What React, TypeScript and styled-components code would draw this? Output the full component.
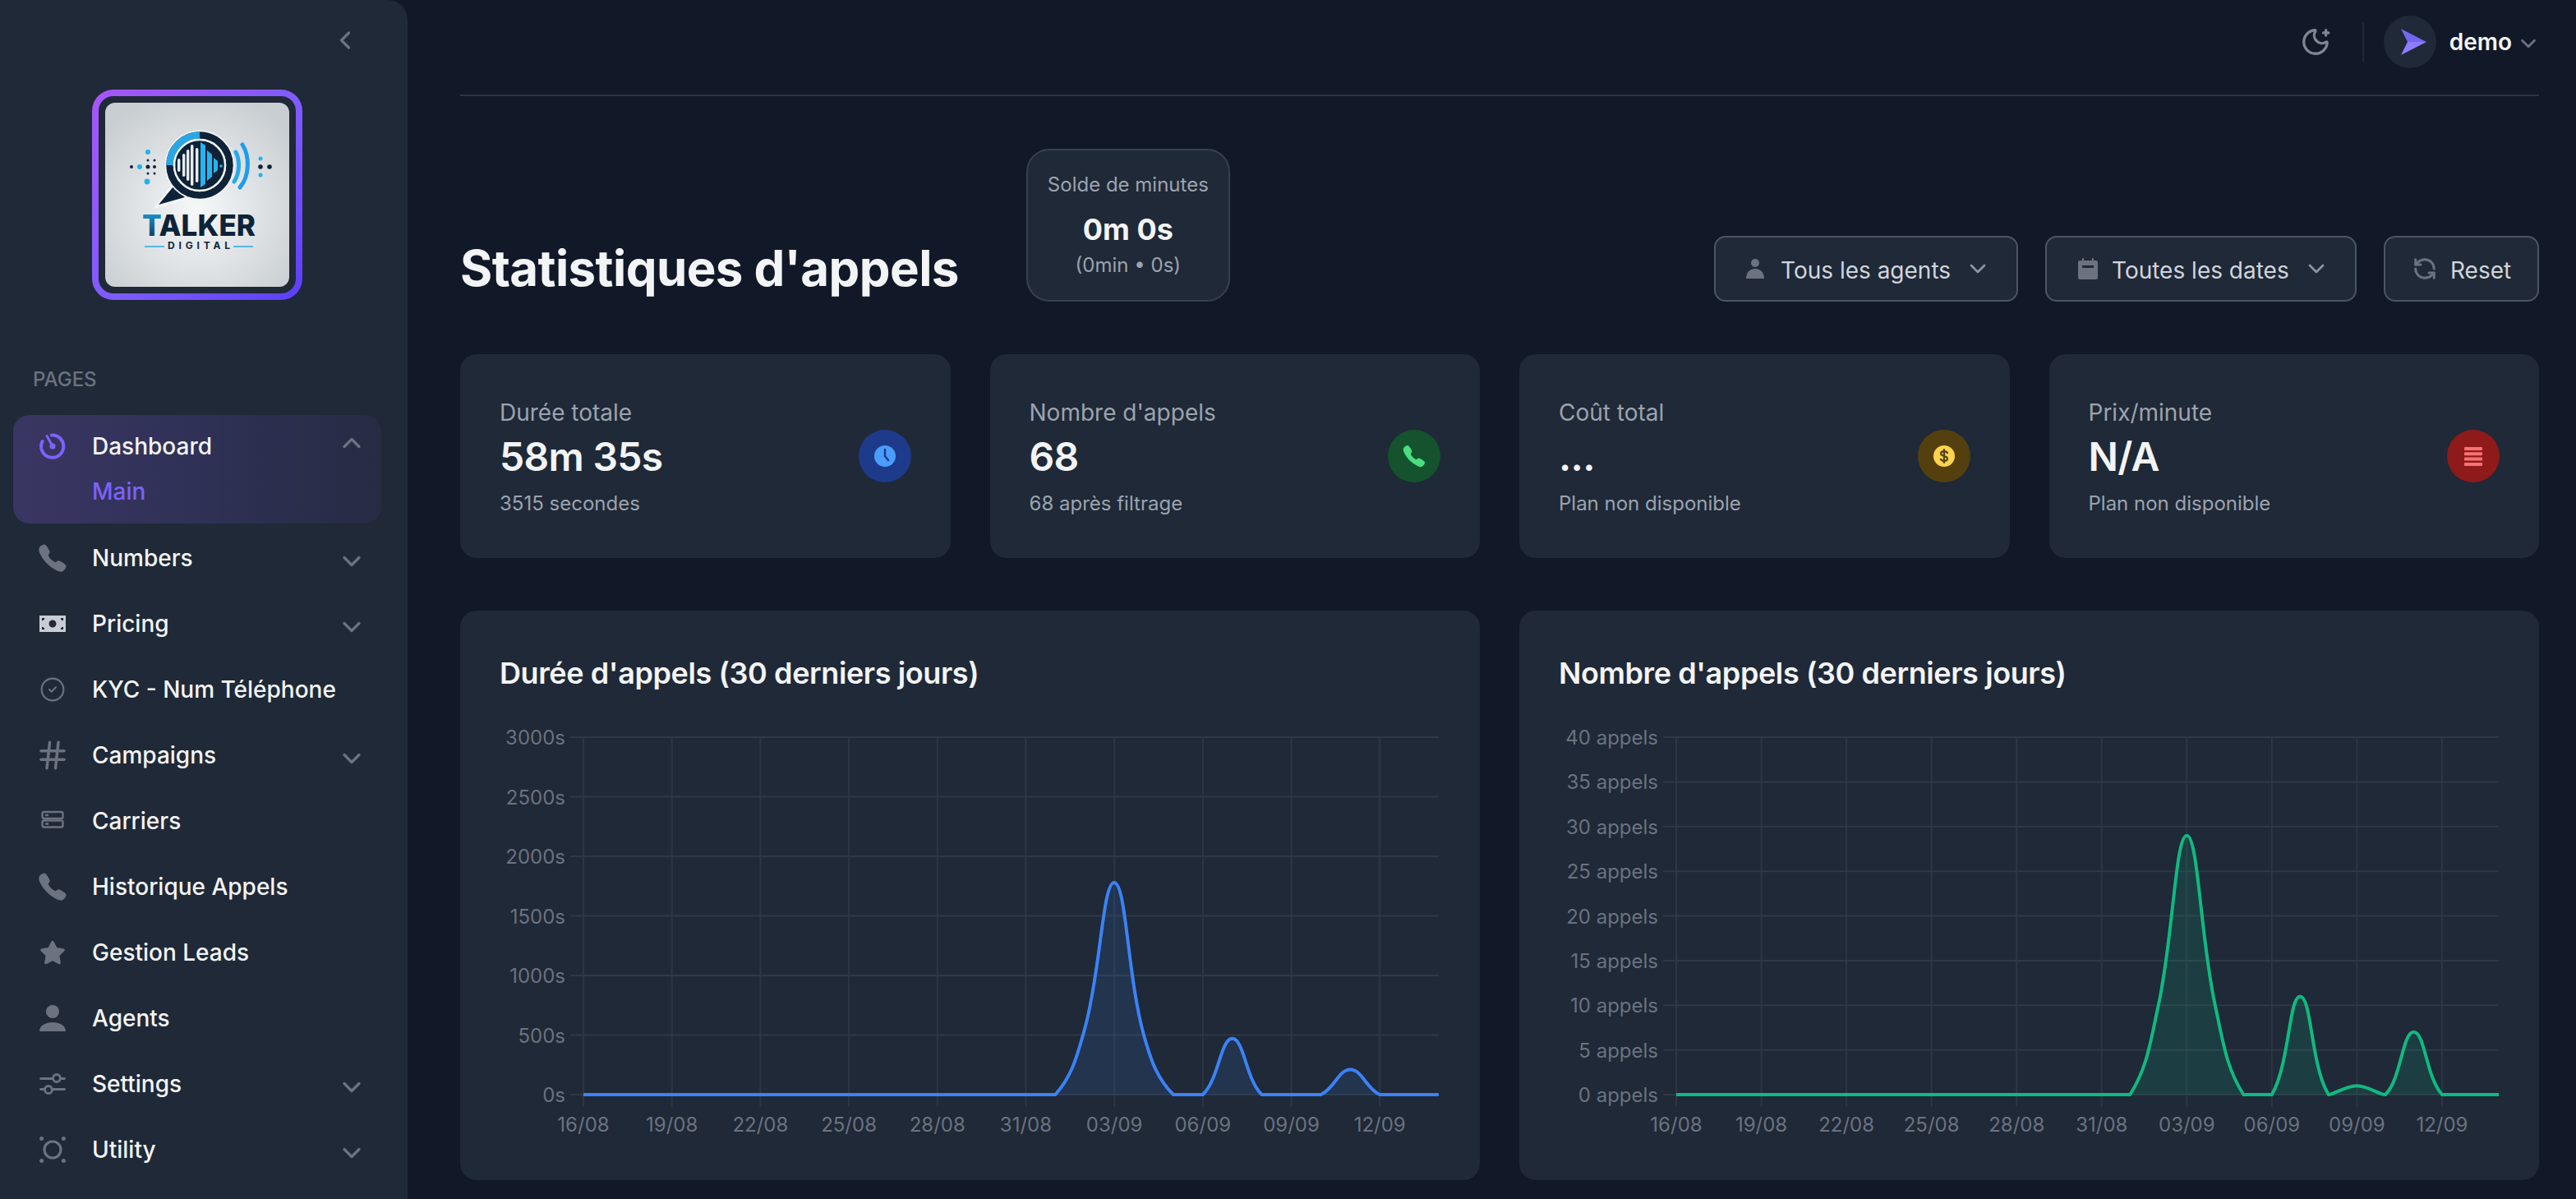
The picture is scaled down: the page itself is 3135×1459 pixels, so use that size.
import styled, { createGlobalStyle } from 'styled-components'
import { ChevronDown, ChevronLeft, ChevronUp, CircleCheck, Hash, MoonStar, RefreshCcw } from 'lucide-react'
import { IoCall } from 'react-icons/io5'
import { FaStar } from 'react-icons/fa'
import type { ReactNode } from 'react'

const GlobalStyle = createGlobalStyle`
  * {
    box-sizing: border-box;
  }

  html, body {
    margin: 0;
    height: 100%;
    background: #111827;
    font-family: Inter, "Noto Sans", sans-serif;
    overflow: hidden;
  }
`

const Page = styled.div`
  display: flex;
  height: 100vh;
  overflow: hidden;
  background: #111827;
`

const Sidebar = styled.aside`
  flex: 0 0 496px;
  display: flex;
  flex-direction: column;
  padding: 0 32px 0 16px;
  background: #1f2937;
  border-radius: 0 24px 0 0;
`

const CollapseRow = styled.div`
  display: flex;
  justify-content: flex-end;
  height: 109px;
  padding: 31px 26px 0 0;
  color: #6b7280;
`

const LogoFrame = styled.div`
  align-self: flex-start;
  margin-left: 96px;
  padding: 8px;
  border-radius: 26px;
  background: linear-gradient(135deg, #a855f7 0%, #7c5cfc 55%, #5b3ff7 100%);
`

const LogoGap = styled.div`
  padding: 8px;
  border-radius: 18px;
  background: #1f2937;
`

const LogoImage = styled.div`
  width: 224px;
  height: 224px;
  border-radius: 12px;
  overflow: hidden;
  background: radial-gradient(circle at 50% 58%, #f6f8f8 0%, #dfe3e5 42%, #c9ced2 85%);

  svg {
    display: block;
  }
`

const SectionLabel = styled.div`
  margin: 80px 0 26px 24px;
  font-size: 24px;
  line-height: 34px;
  font-weight: 500;
  color: #6b7280;
`

const ActiveBox = styled.div`
  height: 132px;
  margin-bottom: 2px;
  padding-top: 2px;
  border-radius: 20px;
  background: linear-gradient(90deg, #3a3663 0%, #2f3156 50%, #252c43 100%);
`

const NavRow = styled.div<{ $active?: boolean }>`
  display: flex;
  align-items: center;
  gap: 32px;
  height: ${props => (props.$active ? '72px' : '80px')};
  padding: 0 18px 0 32px;
  font-size: 28px;
  font-weight: 500;
  color: #f3f4f6;
`

const NavIcon = styled.span<{ $color?: string }>`
  flex: 0 0 32px;
  display: flex;
  align-items: center;
  justify-content: center;
  width: 32px;
  height: 32px;
  color: ${props => props.$color || '#6b7280'};

  svg {
    flex: none;
  }
`

const NavLabel = styled.span`
  flex: 1;
  white-space: nowrap;
`

const NavChevron = styled.span<{ $up?: boolean }>`
  display: flex;
  margin-top: ${props => (props.$up ? '-8px' : '8px')};
  color: #6b7280;
`

const SubLink = styled.div`
  padding-left: 96px;
  font-size: 28px;
  line-height: 34px;
  margin-top: 2px;
  font-weight: 500;
  color: #7c62fb;
`

const Main = styled.main`
  flex: 1;
  min-width: 0;
  padding: 0 45px 0 64px;
`

const TopBar = styled.header`
  display: flex;
  align-items: center;
  justify-content: flex-end;
  height: 117px;
  padding-bottom: 13px;
  border-bottom: 2px solid #2a3545;
`

const IconButton = styled.span`
  display: flex;
  margin-right: 38px;
  color: #7f8592;
`

const Divider = styled.span`
  width: 2px;
  height: 48px;
  margin-right: 24px;
  background: #1f2937;
`

const Avatar = styled.span`
  display: flex;
  align-items: center;
  justify-content: center;
  width: 64px;
  height: 64px;
  border-radius: 50%;
  background: #1f2937;
`

const UserName = styled.span`
  margin-left: 16px;
  font-size: 28px;
  font-weight: 600;
  color: #f3f4f6;
`

const UserChevron = styled.span`
  display: flex;
  margin: 4px -2px 0 5px;
  color: #6b7280;
`

const TitleRow = styled.section`
  display: flex;
  align-items: flex-end;
  justify-content: space-between;
  margin-top: 64px;
`

const TitleGroup = styled.div`
  display: flex;
  align-items: flex-end;
  gap: 82px;
`

const Title = styled.h1`
  margin: 0;
  font-size: 60px;
  line-height: 82px;
  font-weight: 700;
  letter-spacing: -0.6px;
  color: #f3f4f6;
  white-space: nowrap;
`

const BalanceCard = styled.div`
  width: 248px;
  height: 186px;
  padding-top: 26px;
  text-align: center;
  background: #1f2937;
  border: 2px solid #374151;
  border-radius: 28px;
`

const BalanceLabel = styled.div`
  font-size: 24px;
  line-height: 32px;
  color: #9ca3af;
`

const BalanceValue = styled.div`
  margin-top: 14px;
  font-size: 36px;
  line-height: 48px;
  font-weight: 700;
  color: #f3f4f6;
`

const BalanceHint = styled.div`
  margin-top: 4px;
  font-size: 24px;
  line-height: 32px;
  color: #9ca3af;
`

const Filters = styled.div`
  display: flex;
  gap: 33px;
`

const FilterButton = styled.button<{ $w: number }>`
  display: flex;
  align-items: center;
  width: ${props => props.$w}px;
  height: 80px;
  padding: 3px 0 0 37px;
  background: #1f2937;
  border: 2px solid #4b5563;
  border-radius: 14px;
  font-family: inherit;
  font-size: 28px;
  color: #d1d5db;
  white-space: nowrap;
`

const FilterIcon = styled.span`
  display: flex;
  flex: 0 0 42px;
  margin-top: -3px;
  color: #6b7280;
`

const ResetIcon = styled(RefreshCcw)`
  flex: none;
  margin-left: -4px;
`

const FilterChevron = styled.span`
  display: flex;
  margin: -3px 0 0 17px;
  color: #8f95a1;
`

const StatGrid = styled.section`
  display: grid;
  grid-template-columns: repeat(4, 1fr);
  gap: 48px;
  margin-top: 64px;
`

const StatCard = styled.div`
  display: flex;
  align-items: center;
  justify-content: space-between;
  height: 248px;
  padding: 48px;
  background: #1f2937;
  border-radius: 20px;
`

const StatLabel = styled.div`
  margin-top: 1px;
  font-size: 28px;
  line-height: 44px;
  color: #9ca3af;
`

const StatValue = styled.div`
  font-size: 48px;
  line-height: 64px;
  font-weight: 600;
  letter-spacing: -0.7px;
  color: #f3f4f6;
`

const StatHint = styled.div`
  margin-top: 7px;
  font-size: 24px;
  line-height: 36px;
  color: #9ca3af;
`

const StatBadge = styled.div<{ $bg: string }>`
  display: flex;
  align-items: center;
  justify-content: center;
  width: 64px;
  height: 64px;
  border-radius: 50%;
  background: ${props => props.$bg};
`

const ChartGrid = styled.section`
  display: grid;
  grid-template-columns: repeat(2, 1fr);
  gap: 48px;
  margin-top: 64px;
`

const ChartCard = styled.div`
  height: 693px;
  padding: 48px 48px 0;
  background: #1f2937;
  border-radius: 20px;
  overflow: hidden;
`

const ChartTitle = styled.h3`
  margin: 1px 0 -1px;
  font-size: 36px;
  line-height: 54px;
  font-weight: 600;
  letter-spacing: -0.4px;
  color: #f3f4f6;
`

const ChartSvg = styled.svg`
  display: block;
`

const AxisText = styled.text`
  font-family: Inter, "Noto Sans", sans-serif;
  font-size: 24px;
  fill: #6b7280;
`

const PhoneIcon = () => <IoCall size={38} />

const GaugeIcon = () => (
  <svg width="32" height="32" viewBox="0 0 32 32" fill="none">
    <path d="M15 2.6A13.6 13.6 0 1 1 3.6 10" stroke="currentColor" strokeWidth="4" strokeLinecap="round" />
    <path d="M9 3.5 16 16" stroke="currentColor" strokeWidth="3" strokeLinecap="round" />
    <circle cx="16" cy="16" r="3.6" fill="currentColor" />
  </svg>
)

const BillIcon = () => (
  <svg width="32" height="32" viewBox="0 0 32 32">
    <path
      fillRule="evenodd"
      fill="#c9cdd3"
      d="M0 6h32v20H0zM16 11.5a4.5 4.5 0 1 0 0 9 4.5 4.5 0 0 0 0-9zM3 9v3h2v-1h1V9zM26 9v2h1v1h2V9zM3 20v3h3v-2H5v-1zM27 20v1h-1v2h3v-3z"
    />
  </svg>
)

const ServerIcon = () => (
  <svg width="32" height="32" viewBox="0 0 32 32" fill="none" stroke="currentColor" strokeWidth="2.4">
    <rect x="3.5" y="5" width="25" height="8" rx="2" />
    <rect x="3.5" y="15.5" width="25" height="8" rx="2" />
    <path d="M8 9h2M8 19.5h2" strokeLinecap="round" />
  </svg>
)

const PersonIcon = () => (
  <svg width="32" height="32" viewBox="0 0 32 32" fill="currentColor">
    <circle cx="16" cy="8" r="8" />
    <path d="M0 32c0-7 7-11 16-11s16 4 16 11z" />
  </svg>
)

const SmallPersonIcon = () => (
  <svg width="22" height="24" viewBox="0 0 22 24" fill="currentColor">
    <circle cx="11" cy="5" r="5" />
    <path d="M0 24c0-7 4-12 11-12s11 5 11 12z" />
  </svg>
)

const SlidersIcon = () => (
  <svg width="32" height="32" viewBox="0 0 32 32" fill="none" stroke="currentColor" strokeWidth="2.8" strokeLinecap="round">
    <path d="M1.5 9.5H16M25 9.5h5.5M1.5 22.5H6M15 22.5h15.5" />
    <circle cx="21" cy="9" r="4.5" />
    <circle cx="11" cy="23" r="4.5" />
  </svg>
)

const UtilityIcon = () => (
  <svg width="32" height="32" viewBox="0 0 32 32" fill="currentColor">
    <circle cx="16" cy="16" r="10" fill="none" stroke="currentColor" strokeWidth="3.2" />
    <circle cx="2.6" cy="2.6" r="2.5" />
    <circle cx="29.4" cy="2.6" r="2.5" />
    <circle cx="2.6" cy="29.4" r="2.5" />
    <circle cx="29.4" cy="29.4" r="2.5" />
  </svg>
)

const CalendarIcon = () => (
  <svg width="26" height="26" viewBox="0 0 26 26" fill="currentColor">
    <path d="M6 0h2v4H6zM18 0h2v4h-2z" />
    <path fillRule="evenodd" d="M3 3h20a2 2 0 0 1 2 2v19a2 2 0 0 1-2 2H3a2 2 0 0 1-2-2V5a2 2 0 0 1 2-2zM6 9v3h14V9z" />
  </svg>
)

const ClockBadge = () => (
  <svg width="28" height="28" viewBox="0 0 28 28">
    <circle cx="14" cy="14" r="13" fill="#4a9dfb" />
    <path d="M14 6v8l4 5" fill="none" stroke="#1e3a8a" strokeWidth="2.4" strokeLinecap="round" />
  </svg>
)

const DollarBadge = () => (
  <svg width="28" height="28" viewBox="0 0 28 28">
    <circle cx="14" cy="14" r="13" fill="#fcd34d" />
    <path
      d="M18 10.2c-.7-1.4-2.2-2-4-2-2.200 0-4 1-4 2.900 0 4 8 2 8 5.900 0 1.900-1.800 2.900-4 2.900-1.900 0-3.400-.7-4.100-2.100M14 6v16"
      fill="none"
      stroke="#54400f"
      strokeWidth="2.200"
      strokeLinecap="round"
    />
  </svg>
)

const BarsBadge = () => (
  <svg width="26" height="26" viewBox="0 0 26 26" fill="#f87171">
    <rect x="2" y="2" width="22" height="4" rx="1" />
    <rect x="2" y="8.300" width="22" height="4" rx="1" />
    <rect x="2" y="14.600" width="22" height="4" rx="1" />
    <rect x="2" y="21" width="22" height="4" rx="1" />
  </svg>
)

const LogoArt = () => (
  <svg width="224" height="224" viewBox="0 0 224 224">
    <defs>
      <linearGradient id="logoT" x1="0" y1="0" x2="0" y2="1">
        <stop offset="0" stopColor="#1ea7e8" />
        <stop offset="1" stopColor="#0b2a44" />
      </linearGradient>
    </defs>
    <path d="M80 100 59 129l44-12z" fill="#f4f6f7" />
    <path d="M83 102 65 124l32-9z" fill="#0e2338" />
    <circle cx="115" cy="76" r="42.500" fill="#f1f4f6" />
    <circle cx="115" cy="76" r="36.500" fill="none" stroke="#0e2338" strokeWidth="8.500" />
    <path d="M78.500 76A36.500 36.500 0 0 1 115 39.500" fill="none" stroke="#2aa7e4" strokeWidth="8.500" />
    <circle cx="115" cy="76" r="31" fill="#0e2338" stroke="#f1f4f6" strokeWidth="2.400" />
    <g fill="#e8ecef">
      <circle cx="84" cy="76" r="1.500" />
      <rect x="88" y="68" width="3.400" height="16" rx="1.700" />
      <rect x="94" y="62" width="3.400" height="28" rx="1.700" />
      <rect x="99" y="57" width="3.400" height="38" rx="1.700" />
      <rect x="104" y="51" width="3.400" height="50" rx="1.700" />
      <rect x="110" y="55" width="3.400" height="42" rx="1.700" />
    </g>
    <path d="M116 48l6 4v47l-6 4zM124 58l6 5v27l-6 5zM132 67l5 4v11l-5 4z" fill="#27b4ee" />
    <circle cx="141" cy="77" r="1.800" fill="#27b4ee" />
    <path d="M159 60c5 10 5 25-2 36" fill="none" stroke="#27a9ea" strokeWidth="5" strokeLinecap="round" />
    <path d="M167 51c9 14 9 38-3 52" fill="none" stroke="#1f9cec" strokeWidth="5" strokeLinecap="round" />
    <g fill="#1fb3ea">
      <circle cx="52" cy="60" r="3" />
      <circle cx="42" cy="78" r="3" />
      <circle cx="51" cy="96" r="3.400" />
      <circle cx="189" cy="68" r="2.500" />
      <circle cx="189" cy="88" r="2.500" />
    </g>
    <g fill="#0e2338">
      <circle cx="32" cy="78" r="2" />
      <circle cx="52" cy="78" r="2.500" />
      <circle cx="60" cy="78" r="2" />
      <circle cx="52" cy="70" r="1.500" />
      <circle cx="60" cy="70" r="1.500" />
      <circle cx="52" cy="86" r="1.500" />
      <circle cx="60" cy="86" r="1.500" />
      <circle cx="189" cy="78" r="2.800" />
      <circle cx="200" cy="78" r="2.800" />
    </g>
    <text x="45" y="162" fontFamily="Inter, sans-serif" fontWeight="800" fontSize="35" fill="#0e2338" textLength="138">
      <tspan fill="url(#logoT)">T</tspan>ALKER
    </text>
    <text x="76" y="178" fontFamily="Inter, sans-serif" fontWeight="700" fontSize="12" fill="#12263a" textLength="76">
      DIGITAL
    </text>
    <path d="M48 175h24M156 175h24" stroke="#29a9e6" strokeWidth="1.500" />
  </svg>
)

const CHART_W = 1146
const CHART_H = 591
const PLOT_TOP = 52
const PLOT_BOTTOM = 487
const TENSION = 0.4

const clampY = (v: number) => Math.min(PLOT_BOTTOM, Math.max(PLOT_TOP, v))

// spline with control points capped to the plot area, that is why the feet are sharp
const splinePath = (pts: [number, number][]) => {
  const controls = pts.map((cur, i) => {
    const prev = pts[i - 1] || cur
    const next = pts[i + 1] || cur
    const d01 = Math.hypot(cur[0] - prev[0], cur[1] - prev[1])
    const d12 = Math.hypot(next[0] - cur[0], next[1] - cur[1])
    const total = d01 + d12 || 1
    const fa = (TENSION * d01) / total
    const fb = (TENSION * d12) / total
    return {
      inX: cur[0] - fa * (next[0] - prev[0]),
      inY: clampY(cur[1] - fa * (next[1] - prev[1])),
      outX: cur[0] + fb * (next[0] - prev[0]),
      outY: clampY(cur[1] + fb * (next[1] - prev[1])),
    }
  })
  let d = `M${pts[0][0]} ${pts[0][1]}`
  for (let i = 1; i < pts.length; i++) {
    d += `C${controls[i - 1].outX} ${controls[i - 1].outY} ${controls[i].inX} ${controls[i].inY} ${pts[i][0]} ${pts[i][1]}`
  }
  return d
}

const dateLabels = ['16/08', '19/08', '22/08', '25/08', '28/08', '31/08', '03/09', '06/09', '09/09', '12/09']

type LineChartProps = {
  values: Record<number, number>
  max: number
  step: number
  left: number
  right: number
  color: string
  fill: string
  format: (v: number) => string
}

function LineChart({ values, max, step, left, right, color, fill, format }: LineChartProps) {
  const dayW = (right - left) / 29
  const x = (i: number) => left + i * dayW
  const y = (v: number) => PLOT_BOTTOM - (v / max) * (PLOT_BOTTOM - PLOT_TOP)
  const pts: [number, number][] = Array.from({ length: 30 }, (_, i) => [x(i), y(values[i] || 0)])
  const line = splinePath(pts)
  const ticks: number[] = []
  for (let v = 0; v <= max; v += step) ticks.push(v)

  return (
    <ChartSvg width={CHART_W} height={CHART_H} viewBox={`0 0 ${CHART_W} ${CHART_H}`}>
      {dateLabels.map((label, i) => (
        <g key={label}>
          <line x1={x(i * 3)} x2={x(i * 3)} y1={PLOT_TOP} y2={PLOT_BOTTOM + 15} stroke="#2d3644" strokeWidth="2" />
          <AxisText x={x(i * 3)} y={PLOT_BOTTOM + 45} textAnchor="middle">{label}</AxisText>
        </g>
      ))}
      {ticks.map(v => (
        <g key={v}>
          <line x1={left - 16} x2={right} y1={y(v)} y2={y(v)} stroke="#2f3846" strokeWidth="2" />
          <AxisText x={left - 22} y={y(v) + 9} textAnchor="end">{format(v)}</AxisText>
        </g>
      ))}
      <path d={`${line}L${right} ${PLOT_BOTTOM}L${left} ${PLOT_BOTTOM}Z`} fill={fill} />
      <path d={line} fill="none" stroke={color} strokeWidth="4" />
    </ChartSvg>
  )
}

type NavItem = { label: string; icon: ReactNode; expandable?: boolean }

const navItems: NavItem[] = [
  { label: 'Numbers', icon: <PhoneIcon />, expandable: true },
  { label: 'Pricing', icon: <BillIcon />, expandable: true },
  { label: 'KYC - Num Téléphone', icon: <CircleCheck size={32} strokeWidth={1.6} /> },
  { label: 'Campaigns', icon: <Hash size={42} strokeWidth={2} />, expandable: true },
  { label: 'Carriers', icon: <ServerIcon /> },
  { label: 'Historique Appels', icon: <PhoneIcon /> },
  { label: 'Gestion Leads', icon: <FaStar size={32} /> },
  { label: 'Agents', icon: <PersonIcon /> },
  { label: 'Settings', icon: <SlidersIcon />, expandable: true },
  { label: 'Utility', icon: <UtilityIcon />, expandable: true },
]

const stats = [
  { label: 'Durée totale', value: '58m 35s', hint: '3515 secondes', bg: '#1e3a8a', badge: <ClockBadge /> },
  { label: "Nombre d'appels", value: '68', hint: '68 après filtrage', bg: '#14532d', badge: <IoCall size={30} color="#4ade80" /> },
  { label: 'Coût total', value: '...', hint: 'Plan non disponible', bg: '#54400f', badge: <DollarBadge /> },
  { label: 'Prix/minute', value: 'N/A', hint: 'Plan non disponible', bg: '#8f1a1a', badge: <BarsBadge /> },
]

export default function App() {
  return (
    <Page>
      <GlobalStyle />
      <Sidebar>
        <CollapseRow>
          <ChevronLeft size={36} strokeWidth={2.2} />
        </CollapseRow>
        <LogoFrame>
          <LogoGap>
            <LogoImage>
              <LogoArt />
            </LogoImage>
          </LogoGap>
        </LogoFrame>
        <SectionLabel>PAGES</SectionLabel>
        <ActiveBox>
          <NavRow $active>
            <NavIcon $color="#7c62fb"><GaugeIcon /></NavIcon>
            <NavLabel>Dashboard</NavLabel>
            <NavChevron $up><ChevronUp size={36} strokeWidth={2.2} /></NavChevron>
          </NavRow>
          <SubLink>Main</SubLink>
        </ActiveBox>
        {navItems.map(item => (
          <NavRow key={item.label}>
            <NavIcon>{item.icon}</NavIcon>
            <NavLabel>{item.label}</NavLabel>
            {item.expandable && (
              <NavChevron><ChevronDown size={36} strokeWidth={2.2} /></NavChevron>
            )}
          </NavRow>
        ))}
      </Sidebar>
      <Main>
        <TopBar>
          <IconButton><MoonStar size={38} strokeWidth={2.1} /></IconButton>
          <Divider />
          <Avatar>
            <svg width="40" height="40" viewBox="0 0 40 40">
              <path d="M9 4 40 20H17z" fill="#7565f3" />
              <path d="M9 36 40 20H17z" fill="#8f7dff" />
            </svg>
          </Avatar>
          <UserName>demo</UserName>
          <UserChevron><ChevronDown size={30} strokeWidth={2.2} /></UserChevron>
        </TopBar>

        <TitleRow>
          <TitleGroup>
            <Title>Statistiques d'appels</Title>
            <BalanceCard>
              <BalanceLabel>Solde de minutes</BalanceLabel>
              <BalanceValue>0m 0s</BalanceValue>
              <BalanceHint>(0min • 0s)</BalanceHint>
            </BalanceCard>
          </TitleGroup>
          <Filters>
            <FilterButton $w={370}>
              <FilterIcon><SmallPersonIcon /></FilterIcon>
              Tous les agents
              <FilterChevron><ChevronDown size={32} strokeWidth={2} /></FilterChevron>
            </FilterButton>
            <FilterButton $w={379}>
              <FilterIcon><CalendarIcon /></FilterIcon>
              Toutes les dates
              <FilterChevron><ChevronDown size={32} strokeWidth={2} /></FilterChevron>
            </FilterButton>
            <FilterButton $w={189}>
              <FilterIcon><ResetIcon size={30} strokeWidth={2.4} /></FilterIcon>
              Reset
            </FilterButton>
          </Filters>
        </TitleRow>

        <StatGrid>
          {stats.map(stat => (
            <StatCard key={stat.label}>
              <div>
                <StatLabel>{stat.label}</StatLabel>
                <StatValue>{stat.value}</StatValue>
                <StatHint>{stat.hint}</StatHint>
              </div>
              <StatBadge $bg={stat.bg}>{stat.badge}</StatBadge>
            </StatCard>
          ))}
        </StatGrid>

        <ChartGrid>
          <ChartCard>
            <ChartTitle>Durée d'appels (30 derniers jours)</ChartTitle>
            <LineChart
              values={{ 17: 555, 18: 1780, 19: 500, 22: 470, 26: 210 }}
              max={3000}
              step={500}
              left={102}
              right={1143}
              color="#3b82f6"
              fill="rgba(59, 130, 246, 0.12)"
              format={v => `${v}s`}
            />
          </ChartCard>
          <ChartCard>
            <ChartTitle>Nombre d'appels (30 derniers jours)</ChartTitle>
            <LineChart
              values={{ 17: 10, 18: 29, 19: 10, 22: 11, 24: 1, 26: 7 }}
              max={40}
              step={5}
              left={143}
              right={1144}
              color="#10b981"
              fill="rgba(16, 185, 129, 0.14)"
              format={v => `${v} appels`}
            />
          </ChartCard>
        </ChartGrid>
      </Main>
    </Page>
  )
}
